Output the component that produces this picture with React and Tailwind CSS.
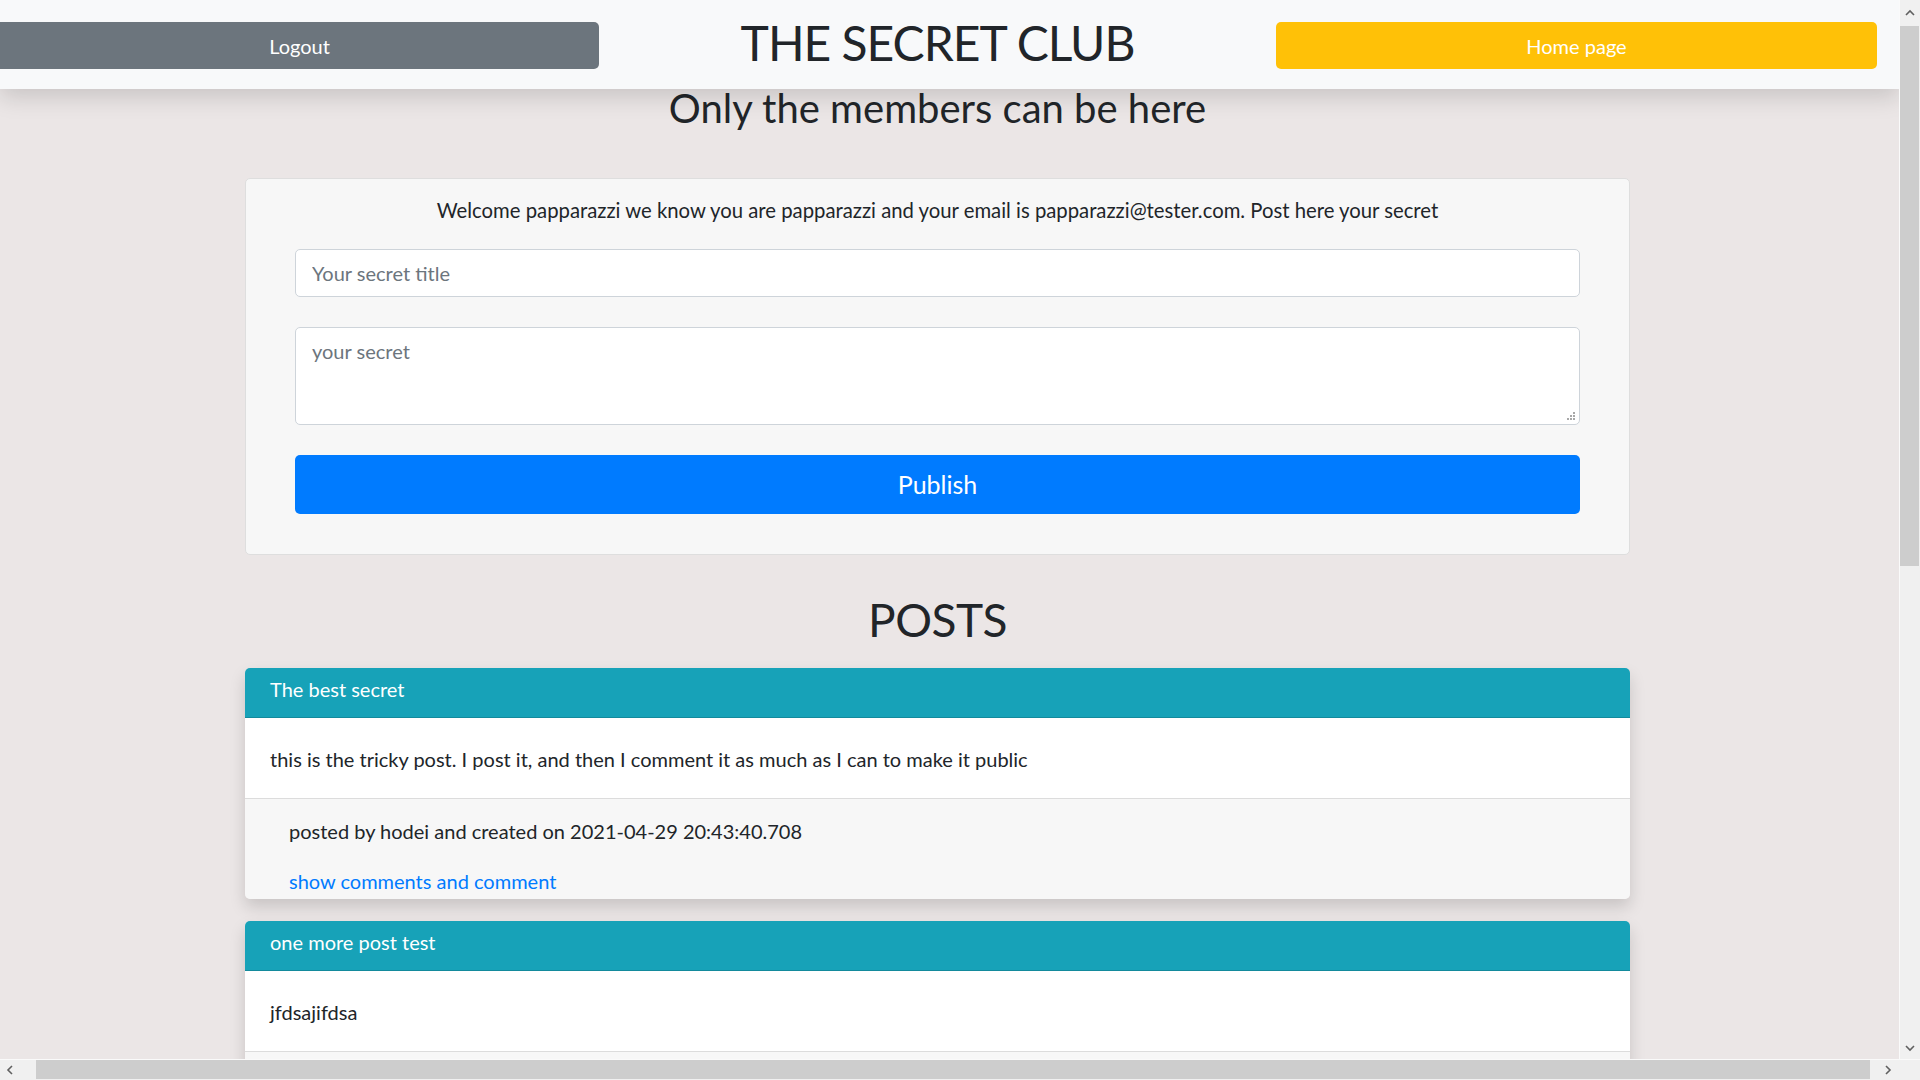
import { useState } from 'react';

const POSTS = [
  {
    title: 'The best secret',
    body: 'this is the tricky post. I post it, and then I comment it as much as I can to make it public',
    author: 'hodei',
    date: '2021-04-29 20:43:40.708',
  },
  {
    title: 'one more post test',
    body: 'jfdsajifdsa',
    author: 'hodei',
    date: '2021-04-29 20:45:12.114',
  },
];

function Chevron({ dir }) {
  const pts = {
    up: '1,6 5,2 9,6',
    down: '1,2 5,6 9,2',
    left: '6,1 2,5 6,9',
    right: '2,1 6,5 2,9',
  }[dir];
  const vert = dir === 'up' || dir === 'down';
  return (
    <svg width={vert ? 10 : 8} height={vert ? 8 : 10} viewBox={vert ? '0 0 10 8' : '0 0 8 10'}>
      <polyline points={pts} fill="none" stroke="#606060" strokeWidth="1.6" />
    </svg>
  );
}

// windows style resize grip, drawn over the textarea corner
function Grip() {
  return (
    <svg className="pointer-events-none absolute right-[4px] bottom-[4px]" width="10" height="10" viewBox="0 0 10 10">
      <g fill="#a8a8a8">
        <rect x="7" y="1" width="2" height="2" />
        <rect x="4" y="4" width="2" height="2" />
        <rect x="7" y="4" width="2" height="2" />
        <rect x="1" y="7" width="2" height="2" />
        <rect x="4" y="7" width="2" height="2" />
        <rect x="7" y="7" width="2" height="2" />
      </g>
    </svg>
  );
}

function PostCard({ post }) {
  return (
    <div className="rounded-[5px] overflow-hidden shadow-[0_8px_16px_rgba(0,0,0,0.15)]">
      <div className="h-[50px] bg-[#17a2b8] border-b border-[#138a9c] px-[25px] pt-[6px] text-[20px] leading-[30px] text-white">
        {post.title}
      </div>
      <div className="bg-white px-[25px] pt-[26px] pb-[24px] text-[20px] leading-[30px] text-[#212529]">{post.body}</div>
      <div className="bg-[#f7f7f7] border-t border-[#dcdcdc] px-[44px] pt-[17px] pb-[3px] text-[20px] leading-[30px]">
        <p className="text-[#212529]">
          posted by {post.author} and created on {post.date}
        </p>
        <a className="mt-[20px] block text-[#007bff]">show comments and comment</a>
      </div>
    </div>
  );
}

export default function App() {
  const [title, setTitle] = useState('');
  const [secret, setSecret] = useState('');

  return (
    <div className="h-screen w-screen flex flex-col overflow-hidden bg-[#ebe6e6] font-[Lato,sans-serif] text-[#212529]">
      <div className="flex flex-1 min-h-0">
        <div className="flex-1 min-w-0 overflow-hidden">
          <header className="relative z-10 flex h-[89px] bg-[#f8f9fa] shadow-[0_8px_22px_rgba(0,0,0,0.15)]">
            <button className="mt-[22px] h-[47px] w-[599px] rounded-r-[5px] bg-[#6c757d] text-[20px] text-white">
              Logout
            </button>
            <div className="flex-1 pt-[12px] text-center text-[48px] leading-[62px] tracking-[-1px] text-[#212529]">
              THE SECRET CLUB
            </div>
            <button className="mt-[22px] mr-[22px] h-[47px] w-[601px] rounded-[5px] bg-[#ffc107] text-[20px] text-white">
              Home page
            </button>
          </header>

          <main className="w-[1875px]">
            <h2 className="text-center text-[40px] leading-[38px]">Only the members can be here</h2>

            <div className="mx-auto mt-[51px] w-[1385px]">
              <form
                className="rounded-[5px] border border-[#dedede] bg-[#f7f7f7] px-[49px] pt-[16px] pb-[40px]"
                onSubmit={(e) => e.preventDefault()}
              >
                <p className="text-center text-[20.3px] leading-[30px]">
                  Welcome papparazzi we know you are papparazzi and your email is papparazzi@tester.com. Post here your secret
                </p>
                <input
                  value={title}
                  onChange={(e) => setTitle(e.target.value)}
                  placeholder="Your secret title"
                  className="mt-[24px] block h-[48px] w-full rounded-[5px] border border-[#ced4da] bg-white px-[16px] text-[20px] outline-none placeholder:text-[#6c757d]"
                />
                <div className="relative mt-[30px]">
                  <textarea
                    value={secret}
                    onChange={(e) => setSecret(e.target.value)}
                    placeholder="your secret"
                    className="block h-[98px] w-full resize-none rounded-[5px] border border-[#ced4da] bg-white px-[16px] py-[8px] text-[20px] leading-[30px] outline-none placeholder:text-[#6c757d]"
                  />
                  <Grip />
                </div>
                <button className="mt-[30px] block h-[59px] w-full rounded-[5px] bg-[#007bff] text-[25px] text-white">
                  Publish
                </button>
              </form>

              <h2 className="mt-[34px] mb-[17px] text-center text-[46px] leading-[62px] tracking-[-0.5px]">POSTS</h2>

              <div className="flex flex-col gap-[22px]">
                {POSTS.map((p) => (
                  <PostCard key={p.title} post={p} />
                ))}
              </div>
            </div>
          </main>
        </div>

        <div className="flex w-[21px] flex-col border-l border-[#fafafa] bg-[#f0f0f0]">
          <div className="flex h-[26px] items-center justify-center">
            <Chevron dir="up" />
          </div>
          <div className="mr-[1px] h-[540px] bg-[#cdcdcd]" />
          <div className="flex-1" />
          <div className="flex h-[22px] items-center justify-center">
            <Chevron dir="down" />
          </div>
        </div>
      </div>

      <div className="flex h-[21px] border-t border-[#fafafa] bg-[#f0f0f0]">
        <div className="flex w-[36px] items-center pl-[6px]">
          <Chevron dir="left" />
        </div>
        <div className="w-[1834px] bg-[#cdcdcd] mb-[1px]" />
        <div className="flex w-[29px] items-center justify-end pr-[7px]">
          <Chevron dir="right" />
        </div>
        <div className="w-[21px] bg-[#f0f0f0]" />
      </div>
    </div>
  );
}
